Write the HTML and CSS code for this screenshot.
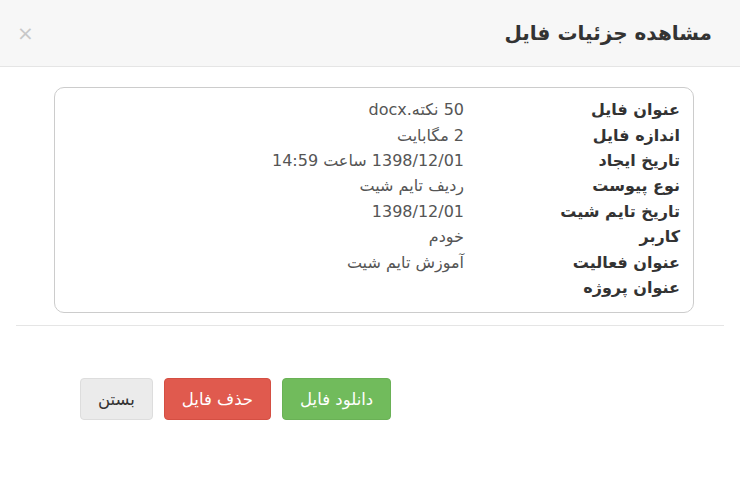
FILE: index.html
```html
<!DOCTYPE html>
<html lang="fa" dir="rtl">
<head>
<meta charset="utf-8">
<link rel="stylesheet" href="styles.css">
</head>
<body>
<div class="modal">
  <div class="modal-header">
    <h4 class="title">مشاهده جزئیات فایل</h4>
    <span class="close">×</span>
  </div>
  <div class="modal-body">
    <div class="card">
      <div class="row"><span class="label">عنوان فایل</span><span class="value">50 نکته.docx</span></div>
      <div class="row"><span class="label">اندازه فایل</span><span class="value">2 مگابایت</span></div>
      <div class="row"><span class="label">تاریخ ایجاد</span><span class="value">1398/12/01 ساعت 14:59</span></div>
      <div class="row"><span class="label">نوع پیوست</span><span class="value">ردیف تایم شیت</span></div>
      <div class="row"><span class="label">تاریخ تایم شیت</span><span class="value">1398/12/01</span></div>
      <div class="row"><span class="label">کاربر</span><span class="value">خودم</span></div>
      <div class="row"><span class="label">عنوان فعالیت</span><span class="value">آموزش تایم شیت</span></div>
      <div class="row"><span class="label">عنوان پروژه</span><span class="value"></span></div>
    </div>
  </div>
  <div class="modal-footer">
    <button class="btn btn-success">دانلود فایل</button>
    <button class="btn btn-danger">حذف فایل</button>
    <button class="btn btn-default">بستن</button>
  </div>
</div>
</body>
</html>
```
FILE: styles.css
```css
html, body {
  margin: 0;
  padding: 0;
  background: #fff;
  font-family: "DejaVu Sans", "Noto Sans", sans-serif;
  color: #333;
}
.modal {
  width: 740px;
}
.modal-header {
  background: #f7f7f7;
  border-bottom: 1px solid #e5e5e5;
  height: 67px;
  display: flex;
  align-items: center;
  justify-content: space-between;
  padding: 0 28px 0 17px;
  box-sizing: border-box;
}
.title {
  margin: 0;
  font-size: 20px;
  font-weight: bold;
  color: #333;
}
.close {
  color: #c8c8c8;
  font-size: 20px;
  line-height: 1;
}
.modal-body {
  padding: 20px 46px 12px 54px;
}
.card {
  border: 1px solid #ccc;
  border-radius: 10px;
  padding: 9px 13px 12px 13px;
}
.row {
  display: flex;
  height: 25.4px;
  align-items: center;
  font-size: 16px;
}
.label {
  width: 216px;
  font-weight: bold;
  color: #333;
}
.value {
  color: #555;
}
.modal-footer {
  margin: 0 16px;
  border-top: 1px solid #e5e5e5;
  padding: 52px 0 0 64px;
  display: flex;
  justify-content: flex-end;
  gap: 11px;
}
.btn {
  font-family: inherit;
  font-size: 16.5px;
  height: 42px;
  padding: 0 17px;
  border-radius: 4px;
  border: 1px solid transparent;
  color: #fff;
}
.btn-success { background: #71bb5c; border-color: #6ab156; }
.btn-danger { background: #e05a4e; border-color: #d44f43; }
.btn-default { background: #ebebeb; color: #333; border-color: #ddd; }
```
